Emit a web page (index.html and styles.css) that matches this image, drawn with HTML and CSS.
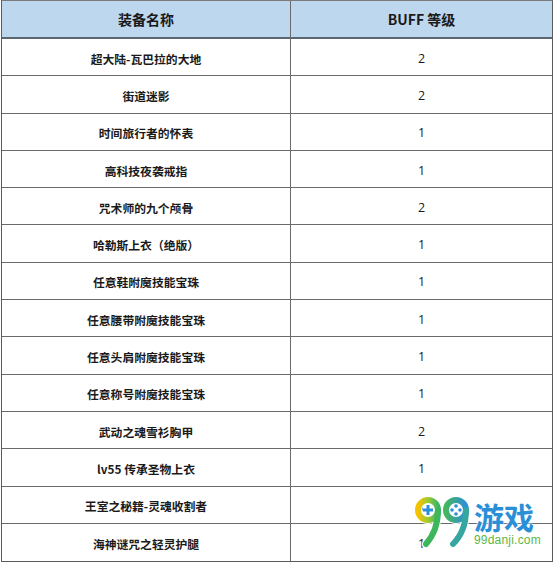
FILE: index.html
```html
<!DOCTYPE html>
<html lang="zh">
<head>
<meta charset="utf-8">
<link rel="stylesheet" href="styles.css">
</head>
<body>
<div class="table">
  <div class="cell head">装备名称</div><div class="cell head last">BUFF 等级</div>
  <div class="cell name">超大陆-瓦巴拉的大地</div><div class="cell num last">2</div>
  <div class="cell name">街道迷影</div><div class="cell num last">2</div>
  <div class="cell name">时间旅行者的怀表</div><div class="cell num last">1</div>
  <div class="cell name">高科技夜袭戒指</div><div class="cell num last">1</div>
  <div class="cell name">咒术师的九个颅骨</div><div class="cell num last">2</div>
  <div class="cell name">哈勒斯上衣（绝版）</div><div class="cell num last">1</div>
  <div class="cell name">任意鞋附魔技能宝珠</div><div class="cell num last">1</div>
  <div class="cell name">任意腰带附魔技能宝珠</div><div class="cell num last">1</div>
  <div class="cell name">任意头肩附魔技能宝珠</div><div class="cell num last">1</div>
  <div class="cell name">任意称号附魔技能宝珠</div><div class="cell num last">1</div>
  <div class="cell name">武动之魂雪衫胸甲</div><div class="cell num last">2</div>
  <div class="cell name">lv55 传承圣物上衣</div><div class="cell num last">1</div>
  <div class="cell name">王室之秘籍-灵魂收割者</div><div class="cell num last">1</div>
  <div class="cell name">海神谜咒之轻灵护腿</div><div class="cell num last">1</div>
</div>

<div class="watermark">
  <svg class="nines" width="64" height="56" viewBox="0 0 64 56">
    <defs>
      <linearGradient id="g1" x1="0" y1="0" x2="1" y2="0">
        <stop offset="0" stop-color="#f7c300"/>
        <stop offset="0.5" stop-color="#9ccc2e"/>
        <stop offset="1" stop-color="#3cb56a"/>
      </linearGradient>
      <linearGradient id="g2" x1="0" y1="0" x2="1" y2="0">
        <stop offset="0" stop-color="#45b660"/>
        <stop offset="1" stop-color="#2b8fd8"/>
      </linearGradient>
    </defs>
    <g fill="none" stroke="#fff" stroke-width="8" stroke-linecap="round">
      <circle cx="17" cy="15" r="10"/>
      <path d="M27 15 C27 30 23 40 15 49"/>
      <circle cx="45" cy="15" r="10"/>
      <path d="M55 15 C55 30 51 40 42 49"/>
    </g>
    <g fill="none" stroke-width="6" stroke-linecap="round">
      <circle cx="17" cy="15" r="10" stroke="url(#g1)"/>
      <path d="M27 15 C27 30 23 40 15 49" stroke="#3db65d"/>
      <circle cx="45" cy="15" r="10" stroke="url(#g2)"/>
      <path d="M55 15 C55 30 51 40 42 49" stroke="#36a7a0"/>
    </g>
    <path d="M15.5 10 h3 v3.5 h3.5 v3 h-3.5 v3.5 h-3 v-3.5 h-3.5 v-3 h3.5z" fill="#2b8fd8"/>
    <g fill="#2b8fd8">
      <circle cx="45" cy="11" r="1.8"/>
      <circle cx="41" cy="15" r="1.8"/>
      <circle cx="49" cy="15" r="1.8"/>
      <circle cx="45" cy="19" r="1.8"/>
    </g>
  </svg>
  <div class="brand">
    <div class="brand-cn">游戏</div>
    <div class="brand-en">99danji.com</div>
  </div>
</div>
</body>
</html>
```
FILE: styles.css
```css
html, body {
  margin: 0;
  padding: 0;
  background: #ffffff;
}
body {
  width: 554px;
  height: 562px;
  overflow: hidden;
  position: relative;
  font-family: "Noto Sans CJK SC", "Noto Sans", sans-serif;
  color: #1a1a1a;
}
.table {
  margin-left: 1px;
  width: 552px;
  box-sizing: border-box;
  border: 1px solid #5b5b5b;
  border-top-color: #7a7a7a;
  display: grid;
  grid-template-columns: 289px 1fr;
  grid-template-rows: 38px repeat(14, 37.3px);
}
.cell {
  display: flex;
  align-items: center;
  justify-content: center;
  border-bottom: 1px solid #6a6a6a;
  border-right: 1px solid #6a6a6a;
  font-size: 12px;
  padding-top: 2px;
  box-sizing: border-box;
}
.cell.last {
  border-right: none;
}
.head {
  background: #bdd7ee;
  font-weight: 700;
  font-size: 14px;
  border-bottom: 2px solid #5c6670;
  padding-top: 0;
}
.name {
  font-weight: 700;
  font-size: 11.8px;
}
.num {
  font-weight: 400;
  font-family: "Open Sans", "Noto Sans", sans-serif;
  font-size: 12.5px;
}
.table > .cell:nth-last-child(-n+2) {
  border-bottom: none;
}
.watermark {
  position: absolute;
  left: 411px;
  top: 495px;
  display: flex;
  align-items: flex-start;
}
.nines {
  display: block;
}
.brand {
  display: flex;
  flex-direction: column;
  margin-left: -1px;
}
.brand-cn {
  font-family: "Noto Sans CJK SC", sans-serif;
  font-weight: 700;
  font-size: 30px;
  line-height: 28px;
  height: 28px;
  margin-top: 7px;
  color: #2b8fd8;
  text-shadow: 0 0 2px #fff, 0 0 2px #fff;
}
.brand-en {
  font-family: "Liberation Sans", sans-serif;
  font-size: 12px;
  line-height: 12px;
  margin-top: 4px;
  color: #5cb746;
  letter-spacing: 0.2px;
  text-shadow: 0 0 2px #fff, 0 0 2px #fff;
}
```
